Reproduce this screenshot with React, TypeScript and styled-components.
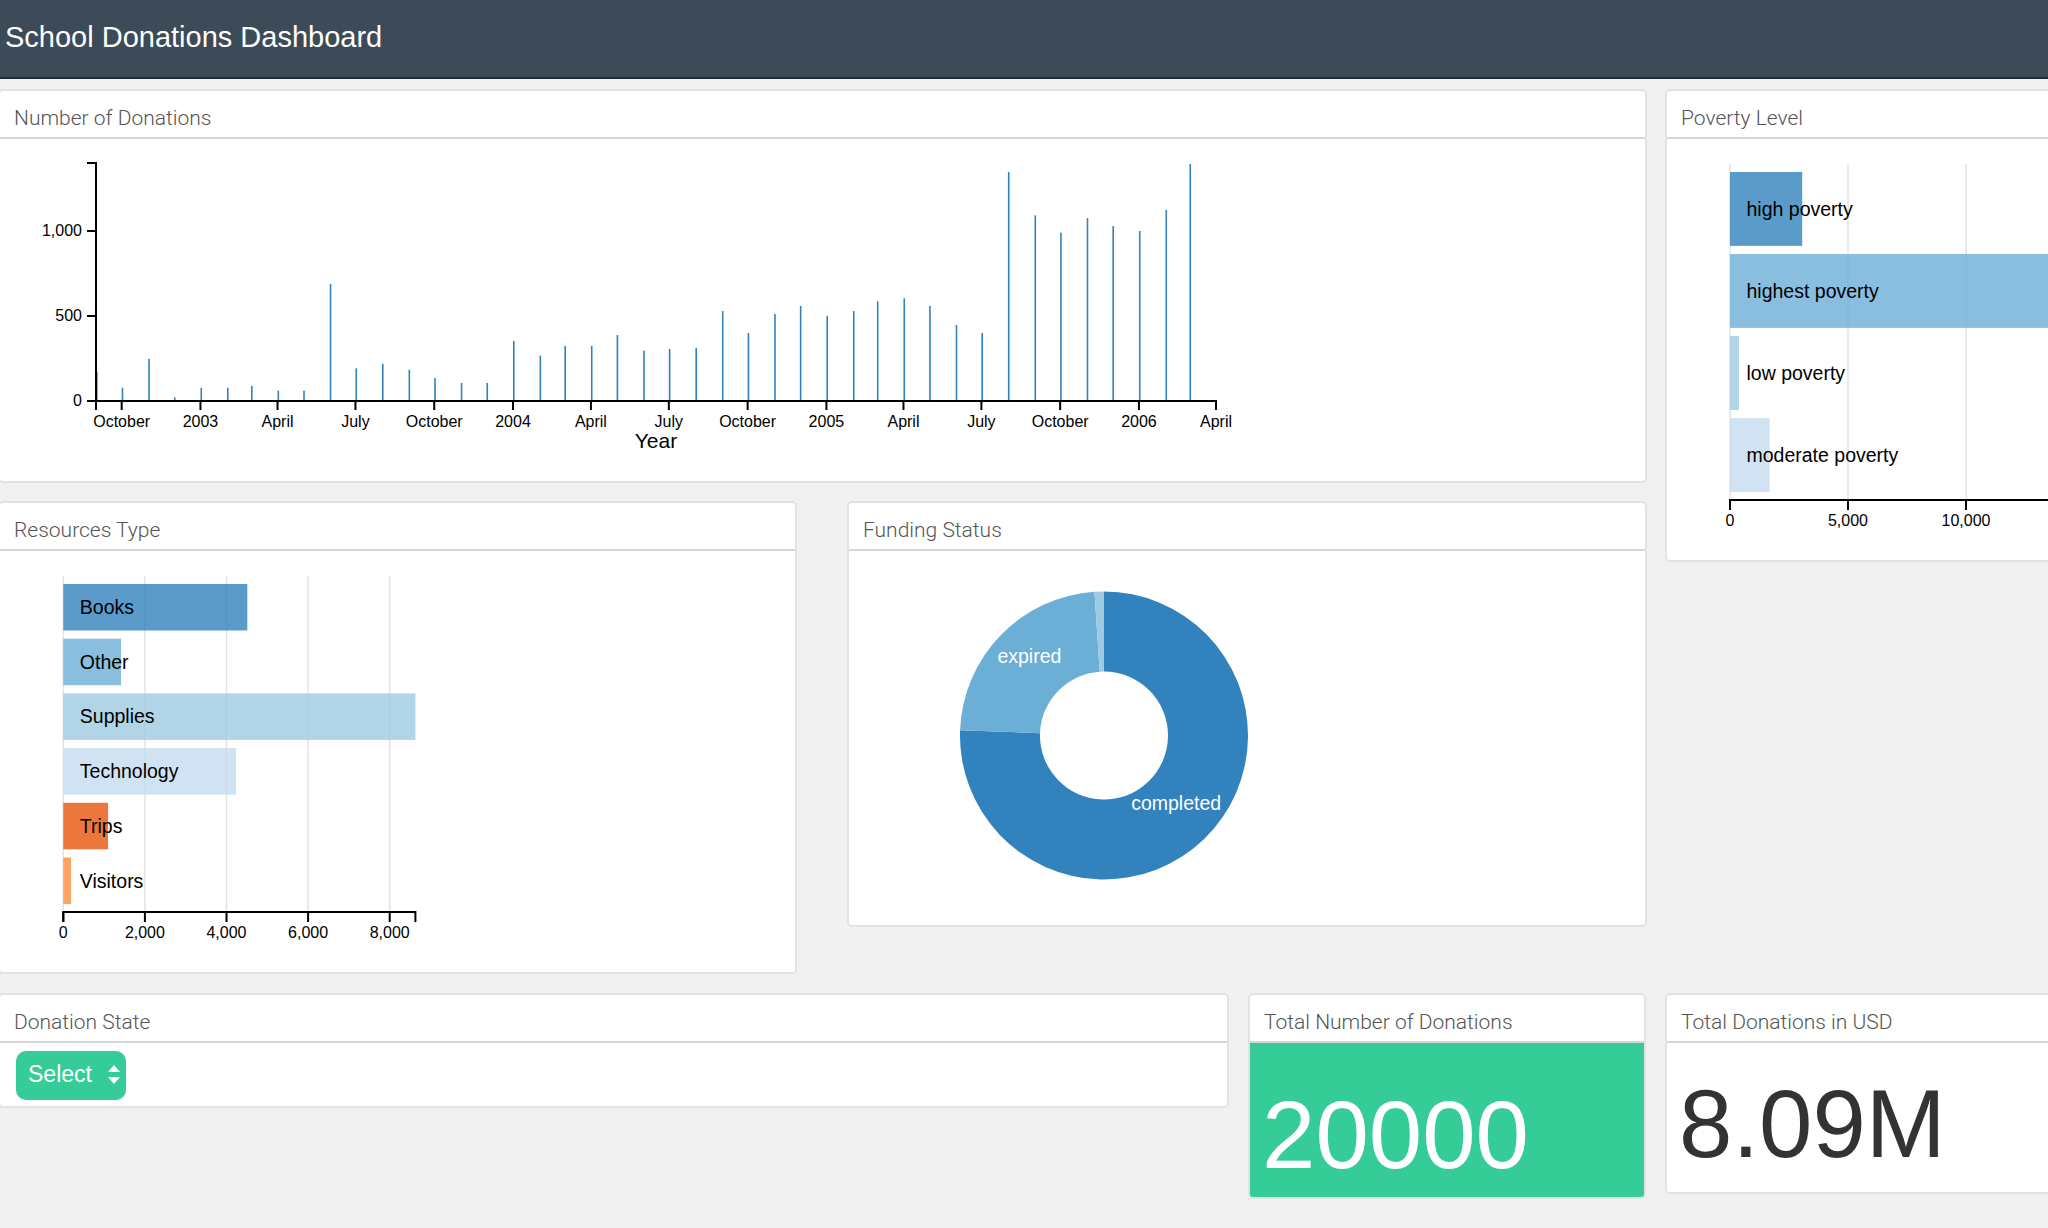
import React from 'react'
import styled, { createGlobalStyle } from 'styled-components'

const GlobalStyle = createGlobalStyle`
  *, *::before, *::after {
    box-sizing: border-box;
  }
  html, body {
    margin: 0;
    padding: 0;
    background: #f1f1f1;
  }
  body {
    font-family: 'Liberation Sans', Arial, sans-serif;
    overflow: hidden;
  }
  svg text {
    font-family: 'Liberation Sans', Arial, sans-serif;
  }
`

const Navbar = styled.header`
  height: 79px;
  background: #3d4a57;
  border-bottom: 2px solid #262b31;
  padding: 23px 0 0 5px;
`

const BrandTitle = styled.h1`
  margin: 0;
  font-size: 29px;
  line-height: 28px;
  font-weight: 400;
  color: #fff;
`

const Page = styled.main`
  display: flex;
  flex-direction: column;
  gap: 19px;
  padding-top: 10px;
  margin-left: -2px;
`

const TopSection = styled.div`
  display: flex;
  gap: 18px;
  align-items: flex-start;
`

const LeftColumn = styled.div`
  display: flex;
  flex-direction: column;
  gap: 18px;
  width: 1649px;
  flex-shrink: 0;
`

const ChartRow = styled.div`
  display: flex;
  justify-content: space-between;
  align-items: flex-start;
`

const BottomRow = styled.div`
  display: grid;
  grid-template-columns: 1231px 398px 800px;
  column-gap: 19px;
  align-items: start;
`

const Card = styled.section<{ $width?: number }>`
  width: ${(p) => (p.$width ? `${p.$width}px` : 'auto')};
  flex-shrink: 0;
  background: #fff;
  border: 2px solid #e2e2e2;
  border-radius: 5px;
  overflow: hidden;
`

const CardTitle = styled.div`
  font-family: Roboto, 'Liberation Sans', sans-serif;
  font-weight: 300;
  font-size: 21px;
  line-height: 30px;
  color: #555;
  padding: 12px 14px 4px;
  border-bottom: 2px solid #d7d7d7;
  white-space: nowrap;
`

const ChartSvg = styled.svg`
  display: block;
`

const SelectBody = styled.div`
  padding: 8px 16px 6px;
`

const SelectButton = styled.button`
  display: flex;
  align-items: center;
  gap: 16px;
  width: 110px;
  height: 49px;
  padding: 0 0 2px 12px;
  border: none;
  border-radius: 10px;
  background: #35cc98;
  color: #fff;
  font-family: 'Liberation Sans', Arial, sans-serif;
  font-size: 23px;
  cursor: pointer;
`

const NumberBody = styled.div<{ $green?: boolean; $padTop: number; $padBottom: number }>`
  background: ${(p) => (p.$green ? '#35cc98' : '#fff')};
  color: ${(p) => (p.$green ? '#fff' : '#333')};
  padding: ${(p) => `${p.$padTop}px 12px ${p.$padBottom}px`};
  font-size: 96px;
  line-height: 96px;
  white-space: nowrap;
`

/* ---------- Number of donations (time bar chart) ---------- */

const monthly = [
  172, 78, 247, 22,
  78, 78, 88, 61, 61, 688, 192, 219, 184, 135, 106, 106,
  353, 267, 324, 324, 388, 296, 306, 312, 529, 400, 512, 559,
  500, 529, 586, 604, 559, 447, 400, 1347, 1092, 990, 1076, 1029,
  1000, 1124, 1394,
]

const t0 = Date.UTC(2002, 8, 1)
const t1 = Date.UTC(2006, 3, 1)
const xOf = (year: number, month: number) => 96 + ((Date.UTC(year, month, 1) - t0) / (t1 - t0)) * 1120
const yOf = (v: number) => 262 - v * 0.17

const timeTicks = [
  { y: 2002, m: 9, label: 'October' },
  { y: 2003, m: 0, label: '2003' },
  { y: 2003, m: 3, label: 'April' },
  { y: 2003, m: 6, label: 'July' },
  { y: 2003, m: 9, label: 'October' },
  { y: 2004, m: 0, label: '2004' },
  { y: 2004, m: 3, label: 'April' },
  { y: 2004, m: 6, label: 'July' },
  { y: 2004, m: 9, label: 'October' },
  { y: 2005, m: 0, label: '2005' },
  { y: 2005, m: 3, label: 'April' },
  { y: 2005, m: 6, label: 'July' },
  { y: 2005, m: 9, label: 'October' },
  { y: 2006, m: 0, label: '2006' },
  { y: 2006, m: 3, label: 'April' },
]

const DonationsChart = () => (
  <ChartSvg width={1645} height={342}>
    {monthly.map((v, i) => {
      const year = 2002 + Math.floor((8 + i) / 12)
      const month = (8 + i) % 12
      return <rect key={i} x={xOf(year, month)} y={yOf(v)} width={1.6} height={262 - yOf(v)} fill="#3182bd" />
    })}
    <path d="M87,24H96V262H87" fill="none" stroke="#000" strokeWidth={2} />
    {[0, 500, 1000].map((v) => (
      <g key={v}>
        <line x1={87} x2={96} y1={yOf(v)} y2={yOf(v)} stroke="#000" strokeWidth={2} />
        <text x={82} y={yOf(v)} dy="0.34em" textAnchor="end" fontSize={16} fill="#000">
          {v.toLocaleString('en-US')}
        </text>
      </g>
    ))}
    <path d="M96,271V262H1216V271" fill="none" stroke="#000" strokeWidth={2} />
    {timeTicks.map((t, i) => {
      const x = xOf(t.y, t.m)
      return (
        <g key={i}>
          <line x1={x} x2={x} y1={262} y2={271} stroke="#000" strokeWidth={2} />
          <text x={x} y={288} textAnchor="middle" fontSize={16} fill="#000">
            {t.label}
          </text>
        </g>
      )
    })}
    <text x={656} y={309} textAnchor="middle" fontSize={21} fill="#000">
      Year
    </text>
  </ChartSvg>
)

/* ---------- Row charts ---------- */

type Row = { label: string; value: number; color: string }
type Tick = { v: number; label: string }

interface RowChartProps {
  rows: Row[]
  x0: number
  pxPerUnit: number
  ticks: Tick[]
  axisEnd: number
  width: number
}

const RowChart = ({ rows, x0, pxPerUnit, ticks, axisEnd, width }: RowChartProps) => {
  const top = 33
  const span = 320
  const gap = 8.2
  const barH = (span - gap * (rows.length - 1)) / rows.length
  const axisY = 361
  return (
    <ChartSvg width={width} height={421}>
      {ticks.map((t) => (
        <line
          key={`g${t.v}`}
          x1={x0 + t.v * pxPerUnit}
          x2={x0 + t.v * pxPerUnit}
          y1={25}
          y2={axisY}
          stroke="#e3e3e3"
          strokeWidth={1.5}
        />
      ))}
      {rows.map((r, i) => {
        const y = top + i * (barH + gap)
        return (
          <g key={r.label}>
            <rect x={x0} y={y} width={r.value * pxPerUnit} height={barH} fill={r.color} fillOpacity={0.8} />
            <text x={x0 + 16.5} y={y + barH / 2} dy="0.35em" fontSize={19.5} fill="#000">
              {r.label}
            </text>
          </g>
        )
      })}
      <path d={`M${x0},${axisY + 10}V${axisY}H${axisEnd}V${axisY + 10}`} fill="none" stroke="#000" strokeWidth={2} />
      {ticks.map((t) => (
        <g key={`t${t.v}`}>
          <line
            x1={x0 + t.v * pxPerUnit}
            x2={x0 + t.v * pxPerUnit}
            y1={axisY}
            y2={axisY + 10}
            stroke="#000"
            strokeWidth={2}
          />
          <text x={x0 + t.v * pxPerUnit} y={axisY + 26} textAnchor="middle" fontSize={16} fill="#000">
            {t.label}
          </text>
        </g>
      ))}
    </ChartSvg>
  )
}

const povertyRows: Row[] = [
  { label: 'high poverty', value: 3060, color: '#3182bd' },
  { label: 'highest poverty', value: 14880, color: '#6baed6' },
  { label: 'low poverty', value: 380, color: '#9ecae1' },
  { label: 'moderate poverty', value: 1680, color: '#c6dbef' },
]

const resourceRows: Row[] = [
  { label: 'Books', value: 4510, color: '#3182bd' },
  { label: 'Other', value: 1414, color: '#6baed6' },
  { label: 'Supplies', value: 8630, color: '#9ecae1' },
  { label: 'Technology', value: 4235, color: '#c6dbef' },
  { label: 'Trips', value: 1097, color: '#e6550d' },
  { label: 'Visitors', value: 190, color: '#fd8d3c' },
]

/* ---------- Funding status donut ---------- */

const pt = (cx: number, cy: number, r: number, a: number) => {
  const rad = (a * Math.PI) / 180
  return `${cx + r * Math.sin(rad)},${cy - r * Math.cos(rad)}`
}

const arcPath = (cx: number, cy: number, r0: number, r1: number, a0: number, a1: number) => {
  const large = a1 - a0 > 180 ? 1 : 0
  return `M${pt(cx, cy, r1, a0)}A${r1},${r1} 0 ${large} 1 ${pt(cx, cy, r1, a1)}L${pt(cx, cy, r0, a1)}A${r0},${r0} 0 ${large} 0 ${pt(cx, cy, r0, a0)}Z`
}

const slices = [
  { label: 'completed', from: 0, to: 272.1, color: '#3182bd', show: true },
  { label: 'expired', from: 272.1, to: 356.2, color: '#6baed6', show: true },
  { label: 'live', from: 356.2, to: 360, color: '#9ecae1', show: false },
]

const FundingChart = () => {
  const cx = 255
  const cy = 184.5
  const r0 = 64
  const r1 = 144
  const mid = (r0 + r1) / 2
  return (
    <ChartSvg width={796} height={374}>
      {slices.map((s) => (
        <path key={s.label} d={arcPath(cx, cy, r0, r1, s.from, s.to)} fill={s.color} />
      ))}
      {slices
        .filter((s) => s.show)
        .map((s) => {
          const a = (((s.from + s.to) / 2) * Math.PI) / 180
          return (
            <text key={s.label} x={cx + mid * Math.sin(a)} y={cy - mid * Math.cos(a)} textAnchor="middle" fontSize={19.5} fill="#fff">
              {s.label}
            </text>
          )
        })}
    </ChartSvg>
  )
}

const SortArrows = () => (
  <svg width={12} height={19} viewBox="0 0 12 19">
    <path d="M0 7L6 0L12 7Z" fill="#fff" />
    <path d="M0 12L6 19L12 12Z" fill="#fff" />
  </svg>
)

export default function App() {
  return (
    <>
      <GlobalStyle />
      <Navbar>
        <BrandTitle>School Donations Dashboard</BrandTitle>
      </Navbar>
      <Page>
        <TopSection>
          <LeftColumn>
            <Card $width={1649}>
              <CardTitle>Number of Donations</CardTitle>
              <DonationsChart />
            </Card>
            <ChartRow>
              <Card $width={799}>
                <CardTitle>Resources Type</CardTitle>
                <RowChart
                  rows={resourceRows}
                  x0={63.3}
                  pxPerUnit={0.0408}
                  axisEnd={63.3 + 8630 * 0.0408}
                  width={795}
                  ticks={[0, 2000, 4000, 6000, 8000].map((v) => ({ v, label: v.toLocaleString('en-US') }))}
                />
              </Card>
              <Card $width={800}>
                <CardTitle>Funding Status</CardTitle>
                <FundingChart />
              </Card>
            </ChartRow>
          </LeftColumn>
          <Card $width={800}>
            <CardTitle>Poverty Level</CardTitle>
            <RowChart
              rows={povertyRows}
              x0={63}
              pxPerUnit={0.0236}
              axisEnd={63 + 14880 * 0.0236}
              width={796}
              ticks={[0, 5000, 10000].map((v) => ({ v, label: v.toLocaleString('en-US') }))}
            />
          </Card>
        </TopSection>
        <BottomRow>
          <Card>
            <CardTitle>Donation State</CardTitle>
            <SelectBody>
              <SelectButton type="button">
                <span>Select</span>
                <SortArrows />
              </SelectButton>
            </SelectBody>
          </Card>
          <Card>
            <CardTitle>Total Number of Donations</CardTitle>
            <NumberBody $green $padTop={44} $padBottom={14}>
              20000
            </NumberBody>
          </Card>
          <Card>
            <CardTitle>Total Donations in USD</CardTitle>
            <NumberBody $padTop={33} $padBottom={20}>
              8.09M
            </NumberBody>
          </Card>
        </BottomRow>
      </Page>
    </>
  )
}
